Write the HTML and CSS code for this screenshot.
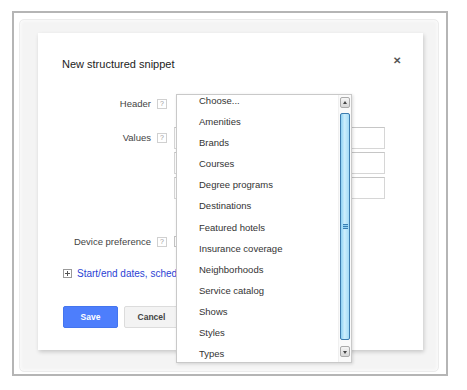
FILE: index.html
```html
<!DOCTYPE html>
<html lang="en">
<head>
  <meta charset="UTF-8" />
  <title>New structured snippet</title>
  <link rel="stylesheet" href="styles.css">
</head>
<body>
  <div class="frame">
    <div class="backdrop">
      <div class="dialog">
        <div class="dialog-header">
          <h1>New structured snippet</h1>
          <span class="close">&#x2715;</span>
        </div>

        <div class="form">
          <div class="row row-header">
            <label class="row-label">Header</label>
            <span class="help">?</span>
          </div>

          <div class="row row-values">
            <label class="row-label">Values</label>
            <span class="help">?</span>
            <div class="value-inputs">
              <input type="text" class="value-input">
              <input type="text" class="value-input">
              <input type="text" class="value-input">
            </div>
          </div>

          <div class="row row-device">
            <label class="row-label">Device preference</label>
            <span class="help">?</span>
            <span class="checkbox"></span>
          </div>

          <div class="more-link">
            <span class="plus-box"></span>
            <a href="#">Start/end dates, scheduling and more</a>
          </div>

          <div class="actions">
            <button class="save-button">Save</button>
            <button class="cancel-button">Cancel</button>
          </div>
        </div>

        <div class="dropdown">
          <ul class="dropdown-list">
            <li>Choose...</li>
            <li>Amenities</li>
            <li>Brands</li>
            <li>Courses</li>
            <li>Degree programs</li>
            <li>Destinations</li>
            <li>Featured hotels</li>
            <li>Insurance coverage</li>
            <li>Neighborhoods</li>
            <li>Service catalog</li>
            <li>Shows</li>
            <li>Styles</li>
            <li>Types</li>
          </ul>
          <div class="scrollbar">
            <div class="scroll-btn scroll-up"></div>
            <div class="scroll-thumb"><span class="grip"></span></div>
            <div class="scroll-btn scroll-down"></div>
          </div>
        </div>
      </div>
    </div>
  </div>
</body>
</html>
```

FILE: styles.css
```css
* {
  margin: 0;
  padding: 0;
  box-sizing: border-box;
}

body {
  background: #fff;
  font-family: 'Liberation Sans', Arial, sans-serif;
  color: #333;
}

.frame {
  margin: 11px 0 0 12px;
  width: 436px;
  height: 365px;
  border: 2px solid #b5b5b5;
  padding: 6px 7px 2px 5px;
}

.backdrop {
  height: 100%;
  background: #f4f4f4;
  border: 1px solid #ececec;
  border-radius: 5px;
  box-shadow: inset 0 0 4px #fff;
  padding: 13px 15px 0 18px;
}

.dialog {
  position: relative;
  height: 317px;
  background: #fff;
  box-shadow: 1px 2px 4px rgba(0, 0, 0, 0.18);
  padding: 24px 22px 0 24px;
}

.dialog-header {
  display: flex;
  justify-content: space-between;
  align-items: center;
  height: 14px;
}

.dialog-header h1 {
  font-size: 11px;
  font-weight: normal;
  color: #222;
  line-height: 14px;
}

.close {
  font-size: 10px;
  font-weight: bold;
  color: #555;
  line-height: 14px;
  margin-top: -7px;
}

.form {
  margin-top: 22px;
}

.row {
  display: flex;
  align-items: flex-start;
}

.row-label {
  width: 89px;
  text-align: right;
  font-size: 9.5px;
  color: #444;
  line-height: 22px;
}

.help {
  width: 10px;
  height: 10px;
  margin: 6px 0 0 6px;
  border: 1px solid #d0d0d0;
  font-size: 7px;
  line-height: 8px;
  text-align: center;
  color: #999;
}

.row-header {
  height: 22px;
}

.row-values {
  margin-top: 12px;
}

.value-inputs {
  display: flex;
  flex-direction: column;
  gap: 3px;
  margin-left: 7px;
}

.value-input {
  width: 211px;
  height: 22px;
  border: 1px solid #d6d6d6;
  border-top-color: #c6c6c6;
  background: #fff;
}

.row-device {
  margin-top: 32px;
  height: 22px;
}

.checkbox {
  width: 11px;
  height: 11px;
  margin: 5px 0 0 7px;
  border: 1px solid #c4c4c4;
}

/* the open dropdown hides the rest of the link */
.more-link {
  display: flex;
  align-items: center;
  width: 114px;
  overflow: hidden;
  margin-top: 13px;
  height: 14px;
  padding-left: 1px;
}

.plus-box {
  position: relative;
  flex: none;
  width: 9px;
  height: 9px;
  border: 1px solid #999;
  background: #fff;
}

.plus-box::before,
.plus-box::after {
  content: '';
  position: absolute;
  background: #555;
}

.plus-box::before {
  left: 1px;
  top: 3px;
  width: 5px;
  height: 1px;
}

.plus-box::after {
  left: 3px;
  top: 1px;
  width: 1px;
  height: 5px;
}

.more-link a {
  margin-left: 5px;
  font-size: 10px;
  color: #2b3fd4;
  text-decoration: none;
  white-space: nowrap;
}

.actions {
  display: flex;
  gap: 6px;
  margin-top: 26px;
  padding-left: 1px;
}

.save-button,
.cancel-button {
  height: 22px;
  width: 55px;
  border-radius: 2px;
  font-family: inherit;
  font-size: 8.5px;
  font-weight: bold;
}

.save-button {
  background: #4d7efc;
  border: 1px solid #4475ee;
  color: #fff;
}

.cancel-button {
  background: #f3f3f3;
  border: 1px solid #dcdcdc;
  color: #444;
}

.dropdown {
  position: absolute;
  left: 138px;
  top: 61px;
  width: 176px;
  height: 269px;
  background: #fff;
  border: 1px solid #c9c9c9;
  box-shadow: 1px 1px 3px rgba(0, 0, 0, 0.15);
  overflow: hidden;
}

.dropdown-list {
  list-style: none;
  margin-top: -5px;
}

.dropdown-list li {
  padding-left: 22px;
  font-size: 9.5px;
  line-height: 21.1px;
  color: #333;
  white-space: nowrap;
}

.scrollbar {
  position: absolute;
  top: 0;
  right: 0;
  bottom: 0;
  width: 13px;
  padding: 2px 1px 0 1px;
  background: #fafafa;
  border-left: 1px solid #f0f0f0;
}

.scroll-btn {
  position: relative;
  height: 11px;
  border: 1px solid #aaa;
  border-radius: 2px;
  background: linear-gradient(#f6f6f6, #d6d6d6);
}

.scroll-btn::after {
  content: '';
  position: absolute;
  left: 2px;
  width: 0;
  height: 0;
  border-left: 2.5px solid transparent;
  border-right: 2.5px solid transparent;
}

.scroll-up::after {
  top: 3px;
  border-bottom: 3px solid #444;
}

.scroll-down::after {
  top: 4px;
  border-top: 3px solid #444;
}

.scroll-thumb {
  display: flex;
  align-items: center;
  justify-content: center;
  height: 227px;
  margin: 5px 0 6px;
  border: 1px solid #3c7caf;
  border-radius: 2px;
  background: linear-gradient(to right, #8fd1f3, #cdeefc 45%, #a4dbf6);
}

.grip {
  width: 5px;
  height: 5px;
  border-top: 1px solid #3a7fb4;
  border-bottom: 1px solid #3a7fb4;
  background: linear-gradient(#8fd1f3 40%, #3a7fb4 40%, #3a7fb4 60%, #8fd1f3 60%);
}
```
